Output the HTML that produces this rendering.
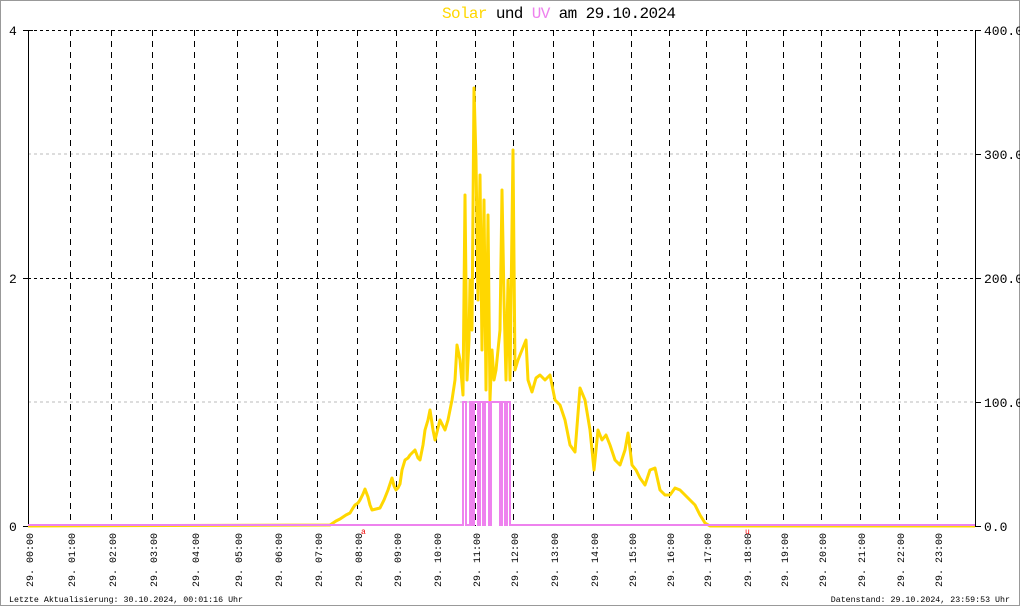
<!DOCTYPE html>
<html><head><meta charset="utf-8"><style>
html,body{margin:0;padding:0;background:#fff}
svg{display:block}
text{font-family:"Liberation Mono","DejaVu Sans Mono",monospace}
</style></head><body>
<svg width="1020" height="606" viewBox="0 0 1020 606" xmlns="http://www.w3.org/2000/svg">
<rect x="0.5" y="0.5" width="1019" height="605" fill="#fff" stroke="#999"/>
<text x="442" y="18" font-size="16" textLength="234" lengthAdjust="spacing"><tspan fill="#ffd700">Solar</tspan> und <tspan fill="#ee82ee">UV</tspan> am 29.10.2024</text>
<g stroke="#bbb" stroke-dasharray="3,3"><line x1="28" y1="154" x2="975" y2="154"/><line x1="28" y1="402" x2="975" y2="402"/></g>
<g stroke="#000" stroke-dasharray="3,3"><line x1="28" y1="30.5" x2="975" y2="30.5"/><line x1="28" y1="278.5" x2="975" y2="278.5"/></g>
<g stroke="#000" stroke-dasharray="6,5">
<line x1="70.5" y1="30" x2="70.5" y2="526"/><line x1="111.5" y1="30" x2="111.5" y2="526"/><line x1="152.5" y1="30" x2="152.5" y2="526"/><line x1="194.5" y1="30" x2="194.5" y2="526"/><line x1="237.5" y1="30" x2="237.5" y2="526"/><line x1="277.5" y1="30" x2="277.5" y2="526"/><line x1="317.5" y1="30" x2="317.5" y2="526"/><line x1="357.5" y1="30" x2="357.5" y2="526"/><line x1="396.5" y1="30" x2="396.5" y2="526"/><line x1="436.5" y1="30" x2="436.5" y2="526"/><line x1="475.5" y1="30" x2="475.5" y2="526"/><line x1="513.5" y1="30" x2="513.5" y2="526"/><line x1="553.5" y1="30" x2="553.5" y2="526"/><line x1="593.5" y1="30" x2="593.5" y2="526"/><line x1="631.5" y1="30" x2="631.5" y2="526"/><line x1="669.5" y1="30" x2="669.5" y2="526"/><line x1="706.5" y1="30" x2="706.5" y2="526"/><line x1="746.5" y1="30" x2="746.5" y2="526"/><line x1="783.5" y1="30" x2="783.5" y2="526"/><line x1="821.5" y1="30" x2="821.5" y2="526"/><line x1="860.5" y1="30" x2="860.5" y2="526"/><line x1="899.5" y1="30" x2="899.5" y2="526"/><line x1="937.5" y1="30" x2="937.5" y2="526"/>
</g>
<g stroke="#000"><line x1="28.5" y1="30" x2="28.5" y2="526"/><line x1="975.5" y1="30" x2="975.5" y2="526"/>
<line x1="23" y1="30.5" x2="33" y2="30.5"/><line x1="23" y1="278.5" x2="28" y2="278.5"/><line x1="23" y1="526.5" x2="28" y2="526.5"/>
<line x1="975" y1="30.5" x2="981" y2="30.5"/><line x1="975" y1="154.5" x2="981" y2="154.5"/><line x1="975" y1="278.5" x2="981" y2="278.5"/><line x1="975" y1="402.5" x2="981" y2="402.5"/><line x1="975" y1="526.5" x2="981" y2="526.5"/></g>
<g font-size="13" fill="#000"><text x="9" y="35">4</text><text x="9" y="283">2</text><text x="9" y="531">0</text>
<text x="984" y="35">400.0</text><text x="984" y="159">300.0</text><text x="984" y="283">200.0</text><text x="984" y="407">100.0</text><text x="984" y="531">0.0</text></g>
<polyline fill="none" stroke="#ffd700" stroke-width="3" stroke-linejoin="round" points="28,526 330,525 336,521 340,519 346,515 350,513 353,508 355,505 358,503 360,500 363,494 365,489 368,497 370,505 372,510 376,509 380,508 384,500 388,490 390,484 392,478 394,486 396,490 398,488 400,484 402,470 405,460 408,458 410,455 413,452 415,450 418,458 420,460 423,445 425,430 428,420 430,410 433,430 435,440 438,428 440,420 443,426 445,430 448,420 450,410 452,400 455,380 457,345 460,360 463,395 465,195 467,380 469,340 470,280 472,330 474,88 476,160 478,300 480,175 482,350 484,200 486,390 488,215 490,400 492,350 494,380 496,370 498,350 500,330 502,190 504,300 506,380 508,280 510,380 513,150 515,370 518,360 522,350 526,340 528,380 532,392 536,378 540,375 545,380 550,375 555,400 560,405 565,420 570,445 575,452 580,388 585,400 590,430 594,470 598,430 602,440 606,435 610,445 615,460 620,465 625,450 628,433 632,465 636,470 640,478 645,485 650,470 655,468 660,490 665,495 670,495 675,488 680,490 685,495 690,500 695,505 700,515 705,523 710,526 975,526"/>
<polyline fill="none" stroke="#ee82ee" stroke-width="2" points="28,525 463,525 463,402 466,402 466,525 470,525 470,402 472,402 472,525 474,525 474,402 478,402 478,525 480,525 480,402 483,402 483,525 485,525 485,402 489,402 489,525 491,525 491,402 500,402 500,525 502,525 502,402 505,402 505,525 507,525 507,402 510,402 510,525 975,525"/>
<g font-size="10" fill="#000">
<text transform="translate(33,587) rotate(-90)">29. 00:00</text><text transform="translate(75,587) rotate(-90)">29. 01:00</text><text transform="translate(116,587) rotate(-90)">29. 02:00</text><text transform="translate(157,587) rotate(-90)">29. 03:00</text><text transform="translate(199,587) rotate(-90)">29. 04:00</text><text transform="translate(242,587) rotate(-90)">29. 05:00</text><text transform="translate(282,587) rotate(-90)">29. 06:00</text><text transform="translate(322,587) rotate(-90)">29. 07:00</text><text transform="translate(362,587) rotate(-90)">29. 08:00</text><text transform="translate(401,587) rotate(-90)">29. 09:00</text><text transform="translate(441,587) rotate(-90)">29. 10:00</text><text transform="translate(480,587) rotate(-90)">29. 11:00</text><text transform="translate(518,587) rotate(-90)">29. 12:00</text><text transform="translate(558,587) rotate(-90)">29. 13:00</text><text transform="translate(598,587) rotate(-90)">29. 14:00</text><text transform="translate(636,587) rotate(-90)">29. 15:00</text><text transform="translate(674,587) rotate(-90)">29. 16:00</text><text transform="translate(711,587) rotate(-90)">29. 17:00</text><text transform="translate(751,587) rotate(-90)">29. 18:00</text><text transform="translate(788,587) rotate(-90)">29. 19:00</text><text transform="translate(826,587) rotate(-90)">29. 20:00</text><text transform="translate(865,587) rotate(-90)">29. 21:00</text><text transform="translate(904,587) rotate(-90)">29. 22:00</text><text transform="translate(942,587) rotate(-90)">29. 23:00</text>
</g>
<text x="361" y="534" font-size="8" fill="#e00">a</text><text x="745" y="534" font-size="8" fill="#e00">u</text>
<text x="9" y="602" font-size="8.3" fill="#000">Letzte Aktualisierung: 30.10.2024, 00:01:16 Uhr</text>
<text x="1010" y="602" font-size="8.3" fill="#000" text-anchor="end">Datenstand: 29.10.2024, 23:59:53 Uhr</text>
</svg>
</body></html>
